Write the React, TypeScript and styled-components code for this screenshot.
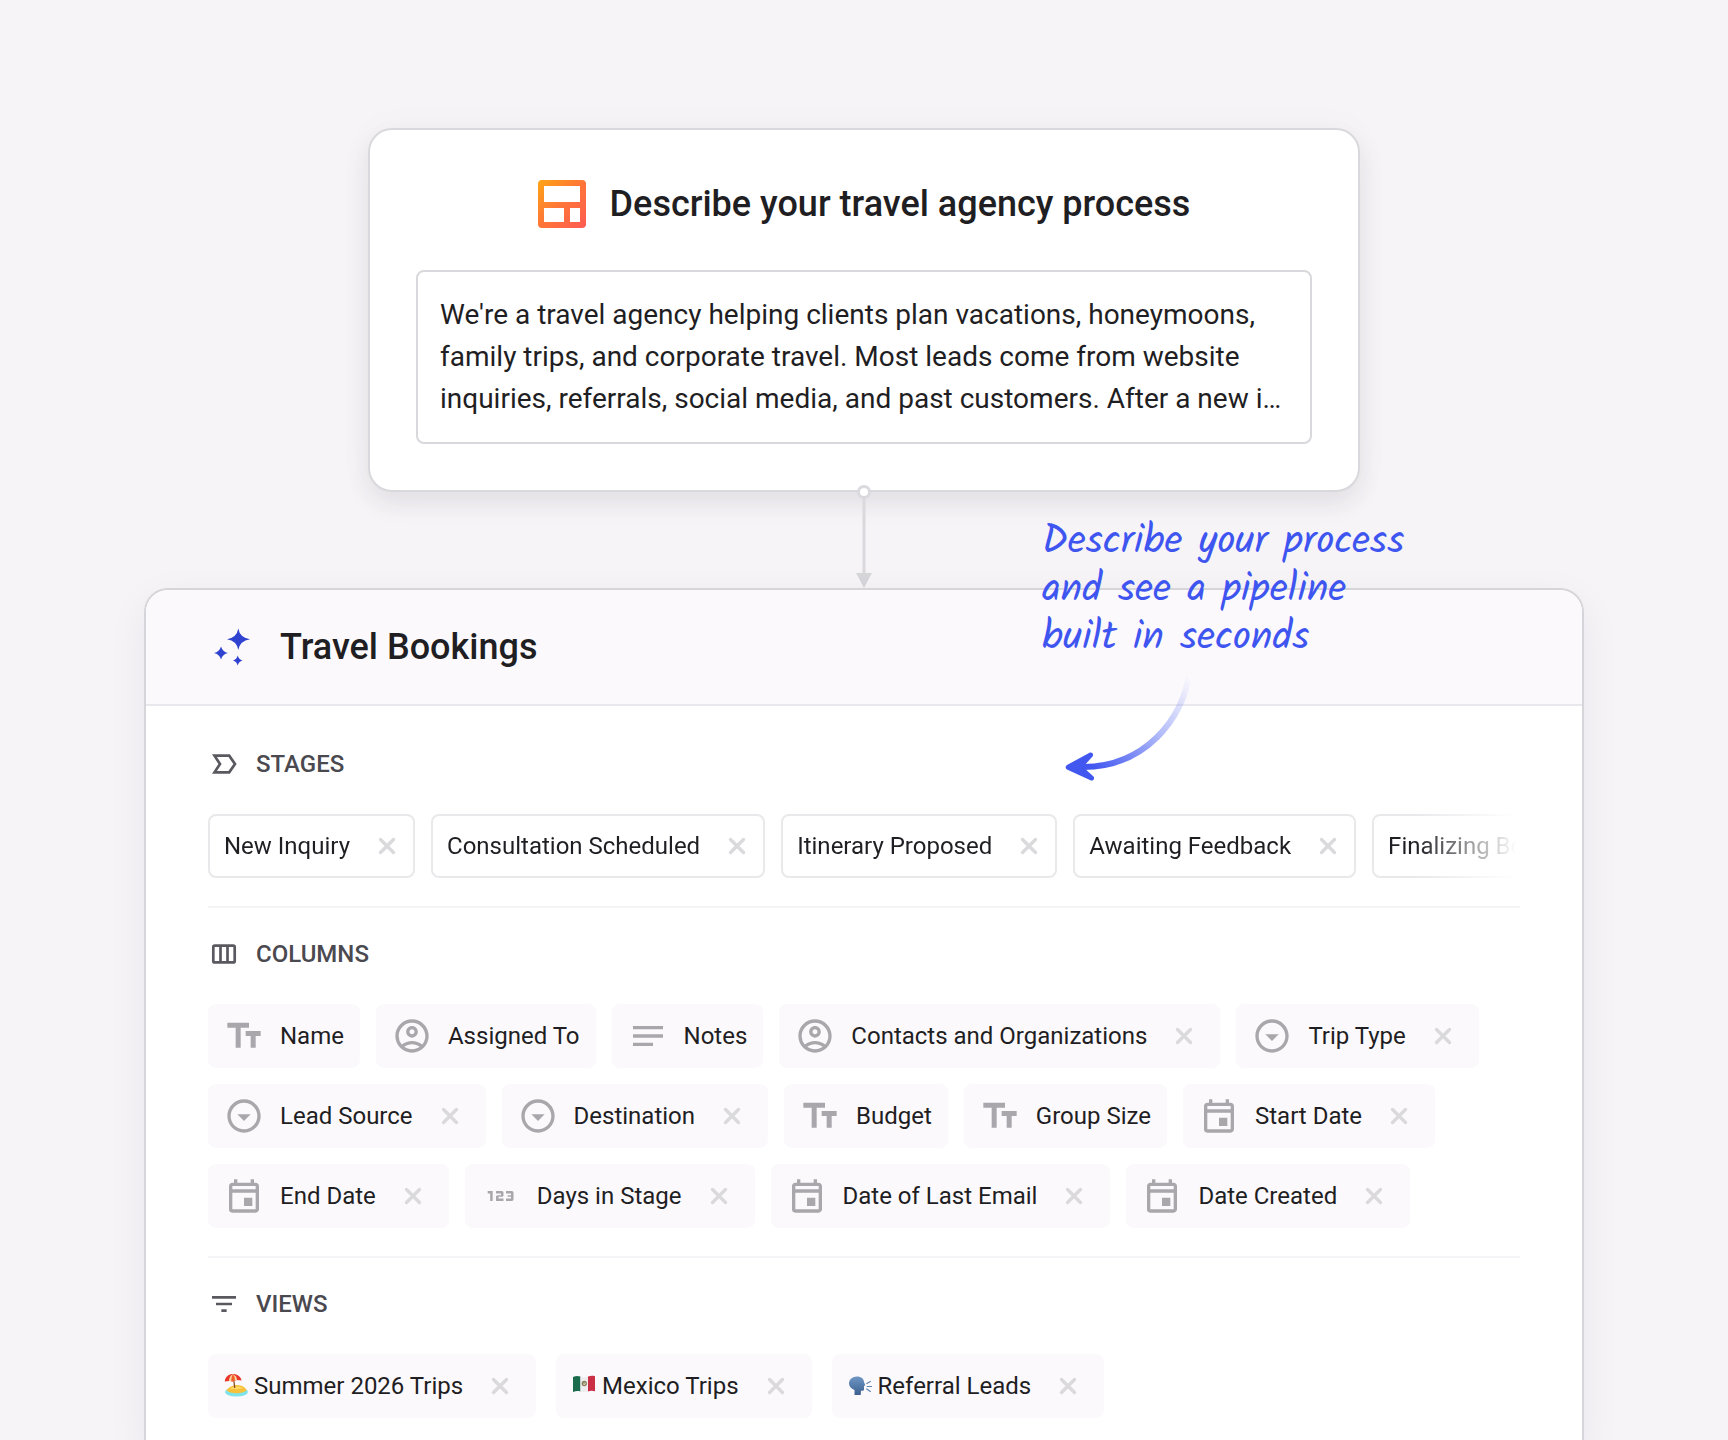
import React from "react";
import styled, { createGlobalStyle, css } from "styled-components";
import {
  Md123,
  MdFilterList,
  MdNotes,
  MdOutlineAccountCircle,
  MdOutlineArrowDropDownCircle,
  MdOutlineEvent,
} from "react-icons/md";

const GlobalStyle = createGlobalStyle`
  *, *::before, *::after { box-sizing: border-box; }
  body {
    margin: 0;
    background: #f6f4f7;
    color: #1f1e23;
    font-family: Roboto, "Liberation Sans", sans-serif;
  }
`;

const Page = styled.main`
  min-height: 100vh;
  padding: 128px 144px 0;
  display: flex;
  flex-direction: column;
  align-items: center;
`;

const PromptCard = styled.section`
  width: 100%;
  max-width: 992px;
  padding: 40px 46px 46px;
  display: flex;
  flex-direction: column;
  gap: 32px;
  border: 2px solid #d9d8dc;
  border-radius: 24px;
  background: #fff;
  box-shadow: 0 12px 24px rgba(40, 34, 54, 0.08), 0 2px 40px rgba(40, 34, 54, 0.03);
`;

const PromptHeading = styled.div`
  min-height: 68px;
  display: flex;
  align-items: center;
  justify-content: center;
  gap: 24px;
`;

const Title = styled.h1`
  margin: 0;
  font-size: 36px;
  line-height: 48px;
  font-weight: 500;
`;

const PromptInput = styled.textarea`
  display: block;
  width: 100%;
  height: 174px;
  padding: 22px;
  border: 2px solid #d9d8dc;
  border-radius: 8px;
  background: #fff;
  color: inherit;
  font: 400 28px/42px Roboto, "Liberation Sans", sans-serif;
  resize: none;
  overflow: hidden;
  outline: none;
`;

const Connector = styled.svg`
  display: block;
  flex: none;
  width: 20px;
  height: 106px;
  margin: -10px 0 0;
`;

const Panel = styled.section`
  position: relative;
  flex: 1;
  width: 100%;
  max-width: 1440px;
  border: 2px solid #d6d5da;
  border-bottom: 0;
  border-radius: 24px 24px 0 0;
  background: #fff;
  box-shadow: 0 12px 40px rgba(40, 34, 54, 0.06);
`;

const PanelHeader = styled.header`
  padding: 33px 62px;
  display: flex;
  align-items: center;
  gap: 24px;
  border-bottom: 2px solid #e9e8ec;
  border-radius: 22px 22px 0 0;
  background: #fbf9fc;
`;

const PanelTitle = styled(Title).attrs({ as: "h2" })``;

const PanelBody = styled.div`
  padding: 12px 62px 0;
`;

const Section = styled.section`
  padding: 30px 0 28px;
  & + & {
    border-top: 2px solid #f4f4f6;
  }
`;

const SectionHeading = styled.h3`
  margin: 0 0 34px;
  display: flex;
  align-items: center;
  gap: 16px;
  color: #4b4950;
  font-size: 24px;
  line-height: 32px;
  font-weight: 500;
  svg {
    width: 32px;
    height: 32px;
    color: #5b5960;
  }
`;

const ChipList = styled.ul<{ $gap?: number; $faded?: boolean }>`
  margin: 0;
  padding: 0;
  display: flex;
  flex-wrap: wrap;
  gap: ${(p) => p.$gap ?? 16}px;
  list-style: none;
  ${(p) =>
    p.$faded &&
    css`
      flex-wrap: nowrap;
      overflow: hidden;
      mask-image: linear-gradient(to right, #000 calc(100% - 104px), transparent calc(100% - 4px));
    `}
`;

const Chip = styled.li<{ $outlined?: boolean; $removable?: boolean }>`
  flex: none;
  height: 64px;
  padding: 0 ${(p) => (p.$removable && !p.$outlined ? 22 : 14)}px 0 14px;
  display: flex;
  align-items: center;
  border: 2px solid ${(p) => (p.$outlined ? "#e9e8eb" : "#fbf9fc")};
  border-radius: 8px;
  background: ${(p) => (p.$outlined ? "#fff" : "#fbf9fc")};
  font-size: 24px;
  line-height: 32px;
  white-space: nowrap;
`;

const ChipIcon = styled.span`
  display: flex;
  margin-right: 16px;
  color: #a9a7ac;
  svg {
    width: 40px;
    height: 40px;
  }
`;

const ChipEmoji = styled.span`
  display: flex;
  margin-right: 6px;
`;

const RemoveButton = styled.button`
  width: 24px;
  height: 24px;
  margin-left: 25px;
  padding: 0;
  display: flex;
  border: 0;
  background: none;
  color: #dad9dc;
  cursor: pointer;
`;

const Note = styled.aside`
  position: absolute;
  top: -72px;
  left: calc(50% + 178px);
  color: #3f55f0;
  p {
    margin: 0;
    font-family: Kalam, Lato, sans-serif;
    font-size: 40px;
    line-height: 48px;
    white-space: pre-line;
  }
  svg {
    display: block;
    margin: 12px 0 0 20px;
  }
`;

function LayoutLogo() {
  return (
    <svg width="48" height="48" viewBox="0 0 48 48" aria-hidden="true">
      <defs>
        <linearGradient id="logo" x1="0" y1="0" x2="1" y2="1">
          <stop offset="0" stopColor="#ffa514" />
          <stop offset="0.5" stopColor="#ff7538" />
          <stop offset="1" stopColor="#ff5a52" />
        </linearGradient>
      </defs>
      <path
        fill="url(#logo)"
        fillRule="evenodd"
        d="M4 0h40a4 4 0 0 1 4 4v40a4 4 0 0 1-4 4H4a4 4 0 0 1-4-4V4a4 4 0 0 1 4-4zM6 6v16h36V6zM6 28v14h20V28zM32 28v14h10V28z"
      />
    </svg>
  );
}

function Sparkles() {
  return (
    <svg width="48" height="48" viewBox="0 0 48 48" fill="#2f43d0" aria-hidden="true">
      <path d="M30.3 5.5Q31.8 14.6 42 16.2Q31.8 17.8 30.3 27Q28.800 17.8 19 16.200Q28.800 14.600 30.300 5.500Z" />
      <path d="M13 23.500Q14.500 28.800 20 30Q14.500 31.200 13 36.500Q11.500 31.200 6 30Q11.500 28.800 13 23.500Z" />
      <path d="M29.700 32.500Q30.700 36.500 34.500 37.500Q30.700 38.500 29.700 42.500Q28.700 38.500 25 37.500Q28.700 36.500 29.700 32.500Z" />
    </svg>
  );
}

function StagesIcon() {
  return (
    <svg viewBox="0 0 32 32" fill="none" stroke="currentColor" strokeWidth="2.7" aria-hidden="true">
      <path d="M6.500 7.700H21.200L27 16l-5.800 8.300H6.500L12 16z" />
    </svg>
  );
}

function ColumnsIcon() {
  return (
    <svg viewBox="0 0 32 32" fill="none" stroke="currentColor" strokeWidth="2.7" aria-hidden="true">
      <rect x="5.300" y="7.700" width="21.400" height="16.700" rx="1.500" />
      <path d="M12.500 8v16M19.500 8v16" />
    </svg>
  );
}

function TextIcon() {
  return (
    <svg viewBox="0 0 24 24" fill="currentColor" aria-hidden="true">
      <path d="M2 4v3h5v12h3V7h5V4zM22 9h-9v3h3v7h3v-7h3z" />
    </svg>
  );
}

function Cross() {
  return (
    <svg width="24" height="24" viewBox="0 0 24 24" aria-hidden="true">
      <path d="M5.500 5.500l13 13M18.500 5.500l-13 13" stroke="currentColor" strokeWidth="3.400" strokeLinecap="round" />
    </svg>
  );
}

function BeachEmoji() {
  return (
    <svg width="24" height="24" viewBox="0 0 24 24" aria-hidden="true">
      <ellipse cx="12.500" cy="18" rx="11.500" ry="4.500" fill="#7fe3ea" />
      <path d="M2.500 16C5 13.500 8 11 13 11s9 3 9.500 5c-2 4-17 4.500-20 0z" fill="#f8c13c" />
      <path d="M6 14.500c3-2 9-2.500 13-.5-4 1-9 1.500-13 .5z" fill="#fbdc6a" />
      <path d="M9.500 3l1.200 11" stroke="#8a4b2a" strokeWidth="1.300" />
      <path d="M.8 6.500C1 1.500 5-1 9-1s8 2.500 8.500 6.500l-4.500-.5-4 1.500-4-.5z" transform="translate(0 1)" fill="#e8362a" />
      <path d="M5 7C5 3.500 7 .8 9 .3c2.500 1 4 3.200 4 5.700L9 7.500z" fill="#fbd9a0" />
      <path d="M7.300 7.300C7 4 8 1.800 9 .3c1.400 1.500 2 3.700 1.900 6.400L9 7.500z" fill="#f0602c" />
    </svg>
  );
}

function MexicoEmoji() {
  return (
    <svg width="24" height="24" viewBox="0 0 24 24" aria-hidden="true">
      <path d="M1 3c3-1.200 5-1 7.500-.4v14.800C6 16.800 4 16.800 1 18z" fill="#1b6b4d" />
      <path d="M8.500 2.600c3 .7 5 .7 7.500 0v14.800c-3 .8-5 .6-7.500 0z" fill="#eeedef" />
      <path d="M16 2.600c2.500-.8 4.500-1 7-.3v15c-2.500-.8-4.500-.7-7 .1z" fill="#cb2f45" />
      <circle cx="12.300" cy="9.500" r="2" fill="none" stroke="#8b7a55" strokeWidth="1.300" />
      <path d="M11 9h2" stroke="#5d7a45" strokeWidth="1.200" />
    </svg>
  );
}

function SpeakingEmoji() {
  return (
    <svg width="24" height="24" viewBox="0 0 24 24" aria-hidden="true">
      <defs>
        <linearGradient id="head" x1="0" y1="0" x2="0" y2="1">
          <stop offset="0" stopColor="#6f97c6" />
          <stop offset="1" stopColor="#3c608f" />
        </linearGradient>
      </defs>
      <path
        d="M1 9.500C1 5.500 4.500 2.500 9 2.500c4.200 0 6.700 2.300 7 5.500l1.300 3.300-1.300.7v3.500c0 1-.8 1.500-3 1.300L12.700 21H6.500v-5C3 14.500 1 12.500 1 9.500z"
        fill="url(#head)"
      />
      <path d="M18.800 9.500l3.500-2M19.200 12.500H23.500M18.800 15l3.500 2.500" stroke="#5f84b0" strokeWidth="1.200" strokeLinecap="round" />
    </svg>
  );
}

type Item = { label: string; icon?: React.ReactNode; emoji?: React.ReactNode; removable?: boolean };

const person = <MdOutlineAccountCircle />;
const choice = <MdOutlineArrowDropDownCircle />;
const date = <MdOutlineEvent />;

const stages: Item[] = [
  "New Inquiry",
  "Consultation Scheduled",
  "Itinerary Proposed",
  "Awaiting Feedback",
  "Finalizing Booking",
].map((label) => ({ label, removable: true }));

const columns: Item[] = [
  { label: "Name", icon: <TextIcon /> },
  { label: "Assigned To", icon: person },
  { label: "Notes", icon: <MdNotes /> },
  { label: "Contacts and Organizations", icon: person, removable: true },
  { label: "Trip Type", icon: choice, removable: true },
  { label: "Lead Source", icon: choice, removable: true },
  { label: "Destination", icon: choice, removable: true },
  { label: "Budget", icon: <TextIcon /> },
  { label: "Group Size", icon: <TextIcon /> },
  { label: "Start Date", icon: date, removable: true },
  { label: "End Date", icon: date, removable: true },
  { label: "Days in Stage", icon: <Md123 />, removable: true },
  { label: "Date of Last Email", icon: date, removable: true },
  { label: "Date Created", icon: date, removable: true },
];

const views: Item[] = [
  { label: "Summer 2026 Trips", emoji: <BeachEmoji />, removable: true },
  { label: "Mexico Trips", emoji: <MexicoEmoji />, removable: true },
  { label: "Referral Leads", emoji: <SpeakingEmoji />, removable: true },
];

function Chips({ items, outlined, gap }: { items: Item[]; outlined?: boolean; gap?: number }) {
  return (
    <ChipList $gap={gap} $faded={outlined}>
      {items.map((item) => (
        <Chip key={item.label} $outlined={outlined} $removable={item.removable}>
          {item.icon && <ChipIcon>{item.icon}</ChipIcon>}
          {item.emoji && <ChipEmoji>{item.emoji}</ChipEmoji>}
          {item.label}
          {item.removable && (
            <RemoveButton type="button" aria-label={`Remove ${item.label}`}>
              <Cross />
            </RemoveButton>
          )}
        </Chip>
      ))}
    </ChipList>
  );
}

const description =
  "We're a travel agency helping clients plan vacations, honeymoons, family trips, and corporate travel. Most leads come from website inquiries, referrals, social media, and past customers. After a new i…";

export default function App() {
  return (
    <>
      <GlobalStyle />
      <Page>
        <PromptCard>
          <PromptHeading>
            <LayoutLogo />
            <Title id="prompt-title">Describe your travel agency process</Title>
          </PromptHeading>
          <PromptInput aria-labelledby="prompt-title" defaultValue={description} spellCheck={false} />
        </PromptCard>
        <Connector viewBox="0 0 20 106" aria-hidden="true">
          <path d="M10 16v78" stroke="#dad9dd" strokeWidth="3" />
          <path d="M2 91h16l-8 15z" fill="#d6d5da" />
          <circle cx="10" cy="10" r="5.500" fill="#fff" stroke="#dad9dd" strokeWidth="3" />
        </Connector>
        <Panel>
          <PanelHeader>
            <Sparkles />
            <PanelTitle>Travel Bookings</PanelTitle>
          </PanelHeader>
          <PanelBody>
            <Section>
              <SectionHeading>
                <StagesIcon />
                STAGES
              </SectionHeading>
              <Chips items={stages} outlined />
            </Section>
            <Section>
              <SectionHeading>
                <ColumnsIcon />
                COLUMNS
              </SectionHeading>
              <Chips items={columns} />
            </Section>
            <Section>
              <SectionHeading>
                <MdFilterList />
                VIEWS
              </SectionHeading>
              <Chips items={views} gap={20} />
            </Section>
          </PanelBody>
          <Note>
            <p>{"Describe your process\nand see a pipeline\nbuilt in seconds"}</p>
            <svg width="132" height="112" viewBox="0 0 132 112" fill="none" aria-hidden="true">
              <defs>
                <linearGradient id="arrow" gradientUnits="userSpaceOnUse" x1="128" y1="4" x2="30" y2="92">
                  <stop offset="0" stopColor="#4157f0" stopOpacity="0" />
                  <stop offset="0.45" stopColor="#4157f0" stopOpacity="0.4" />
                  <stop offset="1" stopColor="#4157f0" />
                </linearGradient>
              </defs>
              <path d="M127 1C121 44 83 94 19 93" stroke="url(#arrow)" strokeWidth="6" />
              <path
                d="M5 91L28 78.500a2.500 2.500 0 0 1 2.500 4L21 93l10.500 9.500a2.500 2.500 0 0 1-2.500 4L5 95.500a2.500 2.500 0 0 1 0-4.500z"
                fill="#4157f0"
              />
            </svg>
          </Note>
        </Panel>
      </Page>
    </>
  );
}
